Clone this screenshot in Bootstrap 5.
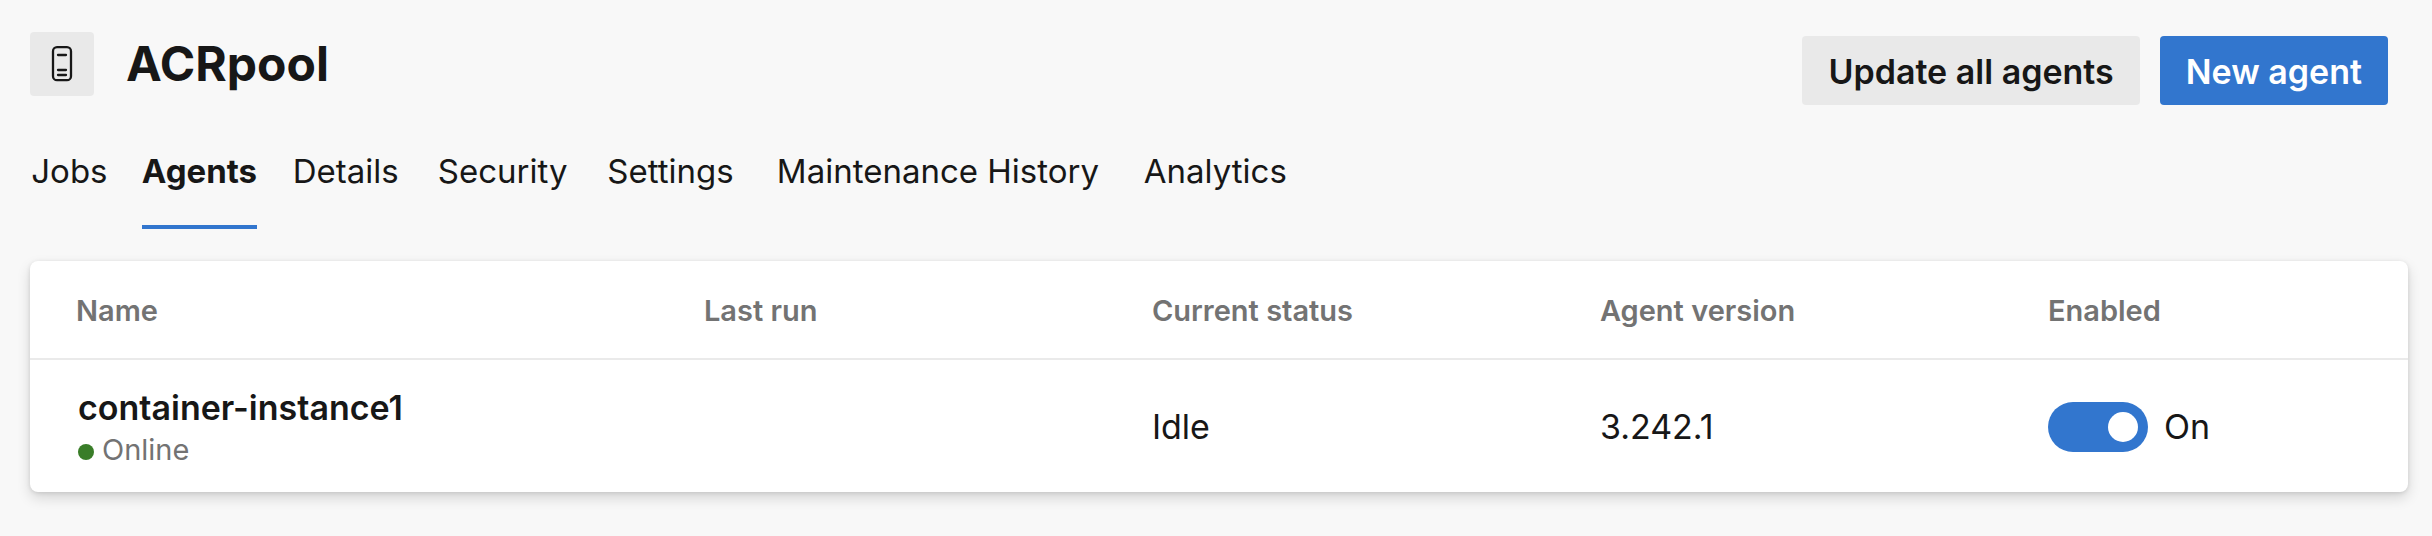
<!DOCTYPE html>
<html lang="en">
<head>
<meta charset="utf-8">
<meta name="viewport" content="width=device-width, initial-scale=1">
<title>ACRpool - Agents</title>
<link href="https://cdn.jsdelivr.net/npm/bootstrap@5.3.0/dist/css/bootstrap.min.css" rel="stylesheet">
<style>
  body { background: #f8f8f8; color: #171717; font-family: Inter, "Liberation Sans", sans-serif; font-size: 34px; line-height: 44px; }
  .page { padding: 32px 24px 40px 30px; }
  .pool-header { padding-right: 20px; }
  .pool-icon { width: 64px; height: 64px; background: #e9e9e9; border-radius: 4px; }
  .pool-title { font-size: 48px; line-height: 64px; font-weight: 700; }
  .pool-actions { gap: 20px; padding-top: 4px; }
  .pool-actions .btn { --bs-btn-border-width: 0; --bs-btn-border-radius: 4px; --bs-btn-font-weight: 600; font-size: 34px; line-height: 45px; padding: 13px 26px 11px; }
  .btn-neutral { --bs-btn-bg: #e9e9e9; --bs-btn-color: #171717; --bs-btn-hover-bg: #dedede; --bs-btn-hover-color: #171717; }
  .btn-primary { --bs-btn-bg: #3276ce; --bs-btn-hover-bg: #2a66b5; }
  .pool-tabs { gap: 33px; margin-top: 44px; font-size: 33px; }
  .pool-tabs .nav-link { --bs-nav-link-padding-x: 0; --bs-nav-link-font-size: 33px; color: #171717; padding: 0 0 32px; border-bottom: 4px solid transparent; text-align: center; }
  /* reserves the bold width so that tabs do not shift on selection */
  .pool-tabs .nav-link::after { content: attr(data-label); display: block; height: 0; overflow: hidden; visibility: hidden; font-weight: 700; }
  .pool-tabs .nav-link.active { font-weight: 700; border-color: #3276ce; }
  .agents-card { margin-top: 32px; border: 0; border-radius: 8px; box-shadow: 0 6px 14px rgba(0,0,0,.14), 0 1px 4px rgba(0,0,0,.11); }
  .agents-table { --bs-table-bg: transparent; --bs-table-color: #171717; table-layout: fixed; }
  .agents-table > :not(caption) > * > * { padding: 0; border: 0; }
  .agents-table > thead > tr > th { font-size: 29px; line-height: 40px; font-weight: 600; color: #737373; padding-top: 30px; padding-bottom: 27px; border-bottom: 2px solid #eaeaea; }
  .agents-table > thead > tr > th:first-child { padding-left: 46px; }
  .agents-table > tbody > tr > td { height: 133px; padding-top: 2px; }
  .agents-table > tbody > tr > td:first-child { padding-left: 48px; padding-top: 4px; }
  .col-name { width: 28.34%; }
  .col-data { width: 18.84%; }
  .agent-state { font-size: 29px; line-height: 40px; color: #737373; gap: 8px; }
  .state-dot { width: 16px; height: 16px; border-radius: 50%; background: #397d28; margin-top: 4px; }
  .agent-toggle { gap: 16px; min-height: 0; padding: 0; }
  .agent-toggle .form-check-input { width: 100px; height: 50px; margin: 0; float: none; border: 0; border-radius: 25px; }
  .agent-toggle .form-check-input:checked { background-color: #3276ce; background-image: url("data:image/svg+xml,%3csvg xmlns='http://www.w3.org/2000/svg' viewBox='-5 -5 10 10'%3e%3ccircle r='3' fill='%23fff'/%3e%3c/svg%3e"); }
</style>
</head>
<body>
<main class="page">
  <header class="pool-header d-flex justify-content-between align-items-start">
    <div class="d-flex align-items-center gap-4">
      <div class="pool-icon">
        <svg width="64" height="64" viewBox="0 0 64 64" fill="none" stroke="#171717" stroke-width="2.3" aria-hidden="true">
          <rect x="23" y="15.2" width="18" height="33" rx="4"/>
          <path d="M28 23h8M28 38h8M28 43h8" stroke-linecap="round"/>
        </svg>
      </div>
      <h1 class="pool-title mb-0 ms-2">ACRpool</h1>
    </div>
    <div class="pool-actions d-flex">
      <button type="button" class="btn btn-neutral">Update all agents</button>
      <button type="button" class="btn btn-primary">New agent</button>
    </div>
  </header>

  <nav class="pool-tabs nav" aria-label="Pool sections">
    <a class="nav-link" href="#jobs" data-label="Jobs">Jobs</a>
    <a class="nav-link active" href="#agents" data-label="Agents" aria-current="page">Agents</a>
    <a class="nav-link" href="#details" data-label="Details">Details</a>
    <a class="nav-link" href="#security" data-label="Security">Security</a>
    <a class="nav-link" href="#settings" data-label="Settings">Settings</a>
    <a class="nav-link" href="#maintenance" data-label="Maintenance History">Maintenance History</a>
    <a class="nav-link" href="#analytics" data-label="Analytics">Analytics</a>
  </nav>

  <section class="agents-card card" id="agents">
    <table class="agents-table table align-middle mb-0">
      <thead>
        <tr>
          <th class="col-name" scope="col">Name</th>
          <th class="col-data" scope="col">Last run</th>
          <th class="col-data" scope="col">Current status</th>
          <th class="col-data" scope="col">Agent version</th>
          <th scope="col">Enabled</th>
        </tr>
      </thead>
      <tbody>
        <tr>
          <td>
            <div class="fw-semibold">container-instance1</div>
            <div class="agent-state d-flex align-items-center"><span class="state-dot"></span>Online</div>
          </td>
          <td></td>
          <td>Idle</td>
          <td>3.242.1</td>
          <td>
            <div class="agent-toggle form-check form-switch d-flex align-items-center mb-0">
              <input class="form-check-input" type="checkbox" role="switch" id="agentEnabled" checked>
              <label class="form-check-label" for="agentEnabled">On</label>
            </div>
          </td>
        </tr>
      </tbody>
    </table>
  </section>
</main>
<script src="https://cdn.jsdelivr.net/npm/bootstrap@5.3.0/dist/js/bootstrap.bundle.min.js"></script>
</body>
</html>
